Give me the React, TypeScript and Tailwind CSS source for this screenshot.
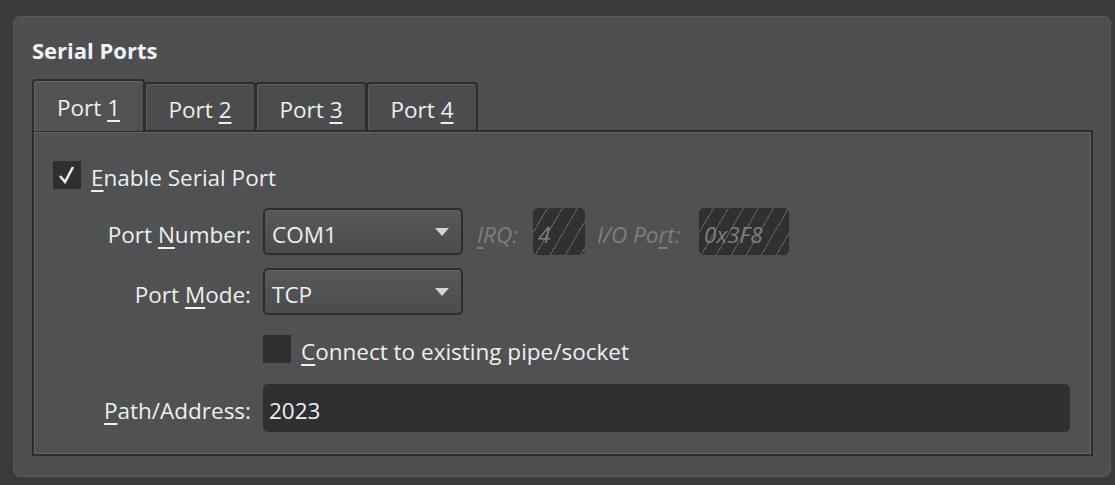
import React from "react";

const font = { fontFamily: '"Open Sans", "Noto Sans", sans-serif' };

// Open Sans sits a little high in its line box; push the glyphs down a few px.
const txt = "pt-[5px] leading-[25px]";

function Combo({ value }: { value: string }) {
  return (
    <div className="flex h-[47px] w-[200px] items-center justify-between rounded-[5px] border-2 border-[#2c2d2f] bg-gradient-to-b from-[#58595b] to-[#4b4c4e] pl-[7px] pr-[12px] shadow-[inset_0_1px_0_#646567]">
      <span className={txt}>{value}</span>
      <svg width="14" height="8" viewBox="0 0 14 8">
        <path d="M0 0 H14 L7 8 Z" fill="#d4d4d6" />
      </svg>
    </div>
  );
}

function Hatched({ value, width }: { value: string; width: string }) {
  return (
    <div
      className={`flex h-[47px] ${width} items-center rounded-[5px] bg-[#2f3032] bg-[repeating-linear-gradient(120deg,transparent_0px,transparent_12px,#606163_12px,#606163_13px)] pl-[5px] italic text-[#7e7f81]`}
    >
      <span className={txt}>{value}</span>
    </div>
  );
}

function Check({ checked }: { checked?: boolean }) {
  return (
    <div className="flex h-[28px] w-[28px] shrink-0 items-center justify-center bg-[#2e2f31]">
      {checked && (
        <svg width="18" height="20" viewBox="0 0 18 20">
          <path d="M2 11 L7 17 L15 2" fill="none" stroke="#ececec" strokeWidth="2.6" strokeLinejoin="miter" />
        </svg>
      )}
    </div>
  );
}

function Tab({ n, active }: { n: number; active?: boolean }) {
  return (
    <div
      className={
        active
          ? "relative z-10 -mb-px flex h-[52px] w-[113px] items-center justify-center rounded-t-[4px] border-2 border-b-0 border-[#2c2d2f] bg-[#515254] pt-[4px] shadow-[inset_1px_1px_0_#646567]"
          : "-ml-px flex h-[48px] w-[112px] items-center justify-center rounded-t-[4px] border-2 border-b-0 border-[#2c2d2f] bg-[#4b4c4e] pt-[6px] shadow-[inset_1px_1px_0_#5e5f61]"
      }
    >
      <span>
        Port <u className="underline-offset-[4px]">{n}</u>
      </span>
    </div>
  );
}

export default function App() {
  return (
    <div
      className="h-[485px] w-[1115px] bg-[#3b3b3b] pl-[13px] pt-[16px] text-[22.5px] leading-[30px] text-[#efefef]"
      style={font}
    >
      <div className="flex h-[461px] w-[1098px] flex-col rounded-[7px] border border-[#58595b] bg-[#4e4f51] pl-[18px] pt-[17px]">
        <h2 className="mb-[13px] text-[22px] font-bold leading-[32px] text-[#f4f4f4]">Serial Ports</h2>

        <div className="flex items-end">
          <Tab n={1} active />
          <Tab n={2} />
          <Tab n={3} />
          <Tab n={4} />
        </div>

        <div className="h-[326px] w-[1061px] border-2 border-[#2c2d2f] bg-[#505153] pl-[19px] pt-[28px] shadow-[inset_1px_1px_0_#646567,inset_-1px_-1px_0_#646567]">
          <label className="flex items-center gap-[10px]">
            <Check checked />
            <span className={txt}>
              <u className="underline-offset-[4px]">E</u>nable Serial Port
            </span>
          </label>

          <div className="mt-[18px] grid grid-cols-[198px_1fr] items-center gap-x-[12px] gap-y-[13px]">
            <span className={`${txt} text-right`}>
              Port <u className="underline-offset-[4px]">N</u>umber:
            </span>
            <div className="flex items-center">
              <Combo value="COM1" />
              <span className={`${txt} ml-[14px] w-[56px] italic text-[#7e7f81]`}>
                <u className="underline-offset-[4px]">I</u>RQ:
              </span>
              <Hatched value="4" width="w-[52px]" />
              <span className={`${txt} ml-[12px] w-[102px] italic text-[#7e7f81]`}>
                I/O Po<u className="underline-offset-[4px]">r</u>t:
              </span>
              <Hatched value="0x3F8" width="w-[90px]" />
            </div>

            <span className={`${txt} text-right`}>
              Port <u className="underline-offset-[4px]">M</u>ode:
            </span>
            <Combo value="TCP" />

            <span />
            <label className="mb-[7px] mt-[6px] flex items-center gap-[10px]">
              <Check />
              <span className={txt}>
                <u className="underline-offset-[4px]">C</u>onnect to existing pipe/socket
              </span>
            </label>

            <span className={`${txt} text-right`}>
              <u className="underline-offset-[4px]">P</u>ath/Address:
            </span>
            <div className="flex h-[48px] w-[807px] items-center rounded-[5px] bg-[#2f3032] pl-[6px]">
              <span className={txt}>2023</span>
            </div>
          </div>
        </div>
      </div>
    </div>
  );
}
